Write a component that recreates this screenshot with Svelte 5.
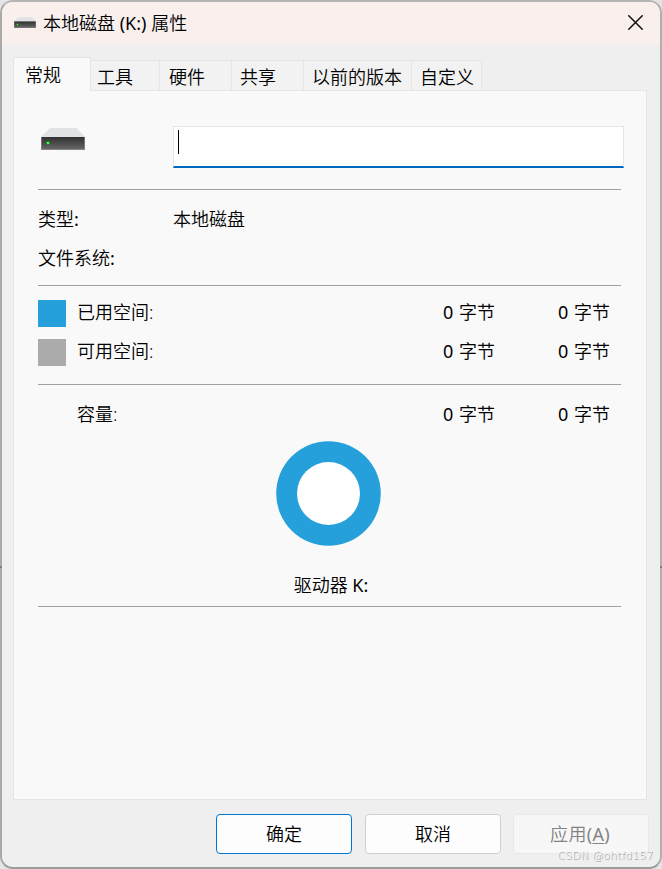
<script>
  const tabs = [
    { label: "常规", width: 78 },
    { label: "工具", width: 69 },
    { label: "硬件", width: 72 },
    { label: "共享", width: 72 },
    { label: "以前的版本", width: 108 },
    { label: "自定义", width: 70 },
  ]

  const usage = [
    { label: "已用空间:", kind: "used" },
    { label: "可用空间:", kind: "free" },
  ]

  let active = $state(0)
</script>

{#snippet drive(id, width, height)}
  <svg class="drive" {width} {height} viewBox="0 0 44 22" preserveAspectRatio="none">
    <defs>
      <linearGradient id={id} x1="0" y1="0" x2="0" y2="1">
        <stop offset="0" stop-color="#303030" />
        <stop offset="1" stop-color="#666" />
      </linearGradient>
    </defs>
    <path d="M9 0H35.5L44 9H0Z" fill="#e0e2e6" />
    <rect y="9" width="44" height="13" fill="#858585" />
    <rect x="0.8" y="9" width="42.4" height="12" fill="url(#{id})" />
    <circle cx="7" cy="15" r="2.1" fill="#16851d" />
    <circle cx="7" cy="15" r="1.3" fill="#4df34d" />
  </svg>
{/snippet}

{#snippet bytes(count)}
  <span class="bytes"><span class="latin">{count}</span> 字节</span>
{/snippet}

<div class="window">
  <header>
    {@render drive("drive-small", 22, 11)}
    <span class="title">本地磁盘 <span class="latin">(K:)</span> 属性</span>
    <button class="close" aria-label="关闭">
      <svg width="15" height="15" viewBox="0 0 15 15">
        <path d="M0.3 0.3L14.7 14.7M14.7 0.3L0.3 14.7" stroke="#111" stroke-width="1.5" />
      </svg>
    </button>
  </header>

  <div class="tabs" role="tablist">
    {#each tabs as tab, i}
      <button
        class="tab"
        class:active={active === i}
        role="tab"
        aria-selected={active === i}
        style="width: {tab.width}px"
        onclick={() => (active = i)}
      >{tab.label}</button>
    {/each}
  </div>

  <main>
    <div class="name">
      {@render drive("drive-large", 44, 22)}
      <div class="field"><span class="caret"></span></div>
    </div>

    <section class="info">
      <div class="row"><span class="label">类型<span class="latin">:</span></span><span>本地磁盘</span></div>
      <div class="row"><span class="label">文件系统<span class="latin">:</span></span></div>
    </section>

    <section class="usage">
      {#each usage as item}
        <div class="row">
          <span class="swatch {item.kind}"></span>
          <span class="kind">{item.label}</span>
          {@render bytes(0)}
          {@render bytes(0)}
        </div>
      {/each}
    </section>

    <section class="capacity">
      <div class="row">
        <span class="swatch"></span>
        <span class="kind">容量:</span>
        {@render bytes(0)}
        {@render bytes(0)}
      </div>
      <svg class="chart" width="105" height="105" viewBox="0 0 105 105">
        <circle cx="52.5" cy="52.5" r="52.3" fill="#26a0da" />
        <circle cx="52.5" cy="52.5" r="31.5" fill="#fff" />
      </svg>
      <div class="caption">驱动器 <span class="latin">K:</span></div>
    </section>

    <section class="rest"></section>
  </main>

  <footer>
    <button class="primary">确定</button>
    <button>取消</button>
    <button disabled>应用<span class="latin">(<u>A</u>)</span></button>
  </footer>

  <span class="mark">CSDN @ohtfd157</span>
</div>

<style>
  :global(body) {
    background: #e4e4e4;
  }

  .window {
    position: relative;
    box-sizing: border-box;
    width: 662px;
    height: 869px;
    border: 2px solid;
    border-color: #b5b5b5 #b0b0b0 #9b9b9b #a9a9a9;
    border-radius: 13px;
    background: #efefef;
    color: #000;
    font: 350 18px/24px "Noto Sans", "Noto Sans CJK SC", sans-serif;

    /* seam of the window behind, visible on both side edges */
    &::before,
    &::after {
      content: "";
      position: absolute;
      top: 564px;
      left: -2px;
      width: 2px;
      height: 2px;
      background: #808080;
    }

    &::after {
      right: -2px;
      left: auto;
    }
  }

  .latin {
    font-weight: 400;
  }

  button {
    box-sizing: border-box;
    margin: 0;
    padding: 0;
    border: 0;
    background: none;
    color: inherit;
    font: inherit;
  }

  svg {
    display: block;
    flex: none;
  }

  header {
    display: flex;
    align-items: center;
    box-sizing: border-box;
    height: 43px;
    padding: 0 17px 2px 12px;
    border-radius: 11px 11px 0 0;
    background: #f9f0ee;
  }

  .title {
    flex: 1;
    margin-left: 7px;
  }

  .tabs {
    display: flex;
    align-items: flex-end;
    height: 45px;
    margin-left: 11px;
  }

  .tab {
    height: 30px;
    padding: 4px 0 1px 9px;
    border: 1px solid #e5e5e5;
    border-width: 1px 1px 0 0;
    background: #f2f2f2;
    text-align: left;
    line-height: 24px;
    white-space: nowrap;

    &:nth-child(2) {
      padding-left: 6px;
    }

    &:nth-child(n + 4) {
      padding-left: 8px;
    }

    &.active {
      position: relative;
      height: 34px;
      margin-bottom: -1px;
      padding: 2px 0 2px 11px;
      border-left-width: 1px;
      background: #f9f9f9;
    }
  }

  main {
    box-sizing: border-box;
    width: 634px;
    height: 710px;
    margin-left: 11px;
    padding: 35px 22px 0 24px;
    border: 1px solid #e5e5e5;
    background: #f9f9f9;
  }

  .name {
    display: flex;
    height: 63px;

    .drive {
      margin: 2px 0 0 3px;
    }
  }

  .field {
    box-sizing: border-box;
    width: 451px;
    height: 42px;
    margin-left: 88px;
    padding: 3px 0 0 4px;
    border: 1px solid #e3e5e8;
    border-bottom: 2px solid #0067c0;
    background: #fff;
  }

  .caret {
    display: block;
    width: 1px;
    height: 24px;
    background: #000;
  }

  section {
    box-sizing: border-box;
    width: 583px;
    border-top: 1px solid #a0a0a0;
  }

  .row {
    display: flex;
    align-items: center;
    height: 39px;
  }

  .info {
    height: 96px;
    padding-top: 9px;
  }

  .label {
    width: 135px;
  }

  .usage {
    height: 99px;
    padding-top: 8px;
  }

  .swatch {
    width: 28px;
    height: 27px;

    &.used {
      background: #26a0da;
    }

    &.free {
      background: #ababab;
    }
  }

  .kind {
    width: 366px;
    margin-left: 11px;
    padding-bottom: 3px;
  }

  .bytes {
    width: 115px;
    padding-bottom: 3px;
    word-spacing: 1px;

    &:last-child {
      width: auto;
    }
  }

  .capacity {
    height: 222px;
    padding-top: 11px;
  }

  .chart {
    margin: 6px 0 0 238px;
  }

  .caption {
    margin-top: 27px;
    padding-left: 3px;
    text-align: center;
  }

  footer {
    display: flex;
    justify-content: flex-end;
    gap: 13px;
    margin: 14px 11px 0 0;

    button {
      width: 136px;
      height: 40px;
      border: 1px solid #d0d0d0;
      border-radius: 4px;
      background: #fdfdfd;

      &.primary {
        border-color: #0078d4;
      }

      &:disabled {
        margin-left: -1px;
        padding-right: 2px;
        border-color: #e8e8e8;
        background: #f7f7f7;
        color: #838383;
        letter-spacing: 0.3px;
      }
    }
  }

  u {
    text-decoration-thickness: 1px;
    text-underline-offset: 2px;
  }

  .mark {
    position: absolute;
    right: 7px;
    bottom: 3px;
    color: #f4f4f4;
    font: 200 11px/16px "DejaVu Sans", sans-serif;
    text-shadow: 1px 1px 0 #999;
  }
</style>
